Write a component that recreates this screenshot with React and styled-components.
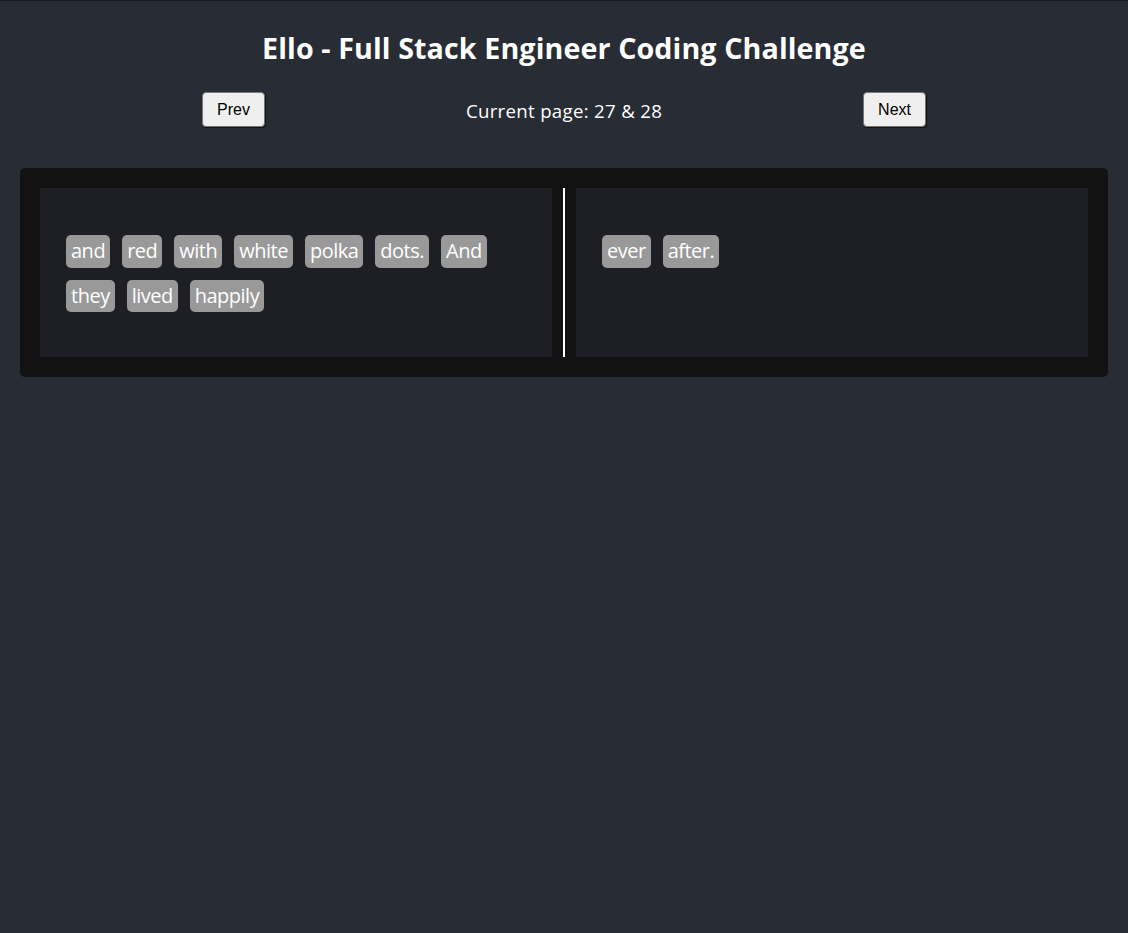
import React from "react"
import styled, { createGlobalStyle } from "styled-components"

const GlobalStyle = createGlobalStyle`
    html, body {
        margin: 0;
        padding: 0;
        background: #282c34;
    }
    body {
        font-family: "Open Sans", "Noto Sans", sans-serif;
        color: #fff;
        min-height: 933px;
        border-top: 1px solid #16181c;
    }
`

const leftWords = ["and", "red", "with", "white", "polka", "dots.", "And", "they", "lived", "happily"]
const rightWords = ["ever", "after."]

const App = () => {
    return (
        <>
            <GlobalStyle />
            <Main>
                <Title>Ello - Full Stack Engineer Coding Challenge</Title>
                <Nav>
                    <NavButton>Prev</NavButton>
                    <PageLabel>Current page: 27 &amp; 28</PageLabel>
                    <NavButton>Next</NavButton>
                </Nav>
                <Book>
                    <Page>
                        {leftWords.map((w, i) => (
                            <Word key={i}>{w}</Word>
                        ))}
                    </Page>
                    <Divider />
                    <Page>
                        {rightWords.map((w, i) => (
                            <Word key={i}>{w}</Word>
                        ))}
                    </Page>
                </Book>
            </Main>
        </>
    )
}

export default App

const Main = styled.div`
    display: flex;
    flex-direction: column;
    align-items: center;
    padding: 0 20px;
`

const Title = styled.h1`
    margin: 26px 0 0;
    font-size: 28.66px;
    font-weight: 700;
    line-height: 42px;
    letter-spacing: 0.1px;
`

const Nav = styled.div`
    display: flex;
    align-items: center;
    justify-content: space-between;
    width: 724px;
    margin-top: 23px;
`

const NavButton = styled.button`
    font-family: "Liberation Sans", Arial, sans-serif;
    font-size: 16px;
    color: #000;
    background: #efefef;
    border: 1px solid #767676;
    border-radius: 4px;
    box-shadow: 1px 1px 1px rgba(0, 0, 0, 0.6);
    padding: 7px 14px;
    line-height: 19px;
    cursor: pointer;
`

const PageLabel = styled.span`
    font-size: 18.66px;
    line-height: 26px;
    padding-top: 3px;
    letter-spacing: 0.3px;
`

const Book = styled.div`
    align-self: stretch;
    display: flex;
    align-items: stretch;
    gap: 11px;
    margin-top: 41px;
    padding: 20px;
    background: #121212;
    border-radius: 5px;
`

const Page = styled.div`
    flex: 1;
    display: flex;
    flex-wrap: wrap;
    align-content: flex-start;
    padding: 41px 20px 39px;
    background: #1e1f24;
`

const Divider = styled.div`
    width: 2px;
    background: #fff;
`

const Word = styled.span`
    margin: 6px;
    padding: 3px 5px;
    font-size: 20px;
    line-height: 26.5px;
    background: #999;
    border-radius: 5px;
    color: #fff;
    letter-spacing: -0.5px;
`
